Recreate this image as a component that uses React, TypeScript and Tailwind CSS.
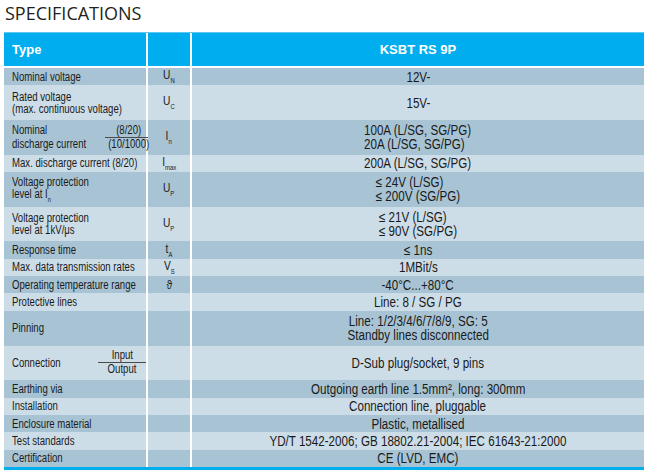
import React from "react";

type Row = {
  label: React.ReactNode;
  sym?: React.ReactNode;
  value: React.ReactNode;
  tall?: boolean;
};

// the original uses a condensed Helvetica; Liberation Sans squeezed gets close
const Narrow = ({ children, className = "" }: React.PropsWithChildren<{ className?: string }>) => (
  <span className={`inline-block origin-left scale-x-[0.8] whitespace-nowrap ${className}`}>{children}</span>
);

const Sub = ({ children }: React.PropsWithChildren) => (
  <span className="align-[-4px] text-[7px] leading-none">{children}</span>
);

const Sym = ({ main, sub }: { main: string; sub?: string }) => (
  <span className="inline-block scale-x-[0.85] whitespace-nowrap">
    {main}
    {sub && <Sub>{sub}</Sub>}
  </span>
);

const Stack = ({ lines }: { lines: string[] }) => (
  <span className="inline-block text-left leading-[14px]">
    {lines.map((l) => (
      <span key={l} className="block">
        {l}
      </span>
    ))}
  </span>
);

const Split = ({ left, top, bottom }: { left: React.ReactNode; top: string; bottom: string }) => (
  <div className="flex h-full items-center justify-between">
    <Narrow className="leading-[14px]">{left}</Narrow>
    <div className="flex w-[48px] flex-col items-center leading-[13px]">
      <span className="scale-x-[0.8] whitespace-nowrap">{top}</span>
      <span className="h-px w-full bg-[#4a4a4a]" />
      <span className="scale-x-[0.8] whitespace-nowrap">{bottom}</span>
    </div>
  </div>
);

const rows: Row[] = [
  { label: "Nominal voltage", sym: <Sym main="U" sub="N" />, value: "12V-" },
  {
    label: (
      <>
        Rated voltage
        <br />
        (max. continuous voltage)
      </>
    ),
    sym: <Sym main="U" sub="C" />,
    value: "15V-",
    tall: true,
  },
  {
    label: (
      <Split
        left={
          <>
            Nominal
            <br />
            discharge current
          </>
        }
        top="(8/20)"
        bottom="(10/1000)"
      />
    ),
    sym: <Sym main="I" sub="n" />,
    value: <Stack lines={["100A (L/SG, SG/PG)", "20A (L/SG, SG/PG)"]} />,
    tall: true,
  },
  { label: "Max. discharge current (8/20)", sym: <Sym main="I" sub="max" />, value: "200A (L/SG, SG/PG)" },
  {
    label: (
      <>
        Voltage protection
        <br />
        level at I<Sub>n</Sub>
      </>
    ),
    sym: <Sym main="U" sub="P" />,
    value: <Stack lines={["≤ 24V (L/SG)", "≤ 200V (SG/PG)"]} />,
    tall: true,
  },
  {
    label: (
      <>
        Voltage protection
        <br />
        level at 1kV/μs
      </>
    ),
    sym: <Sym main="U" sub="P" />,
    value: <Stack lines={["≤ 21V (L/SG)", "≤ 90V (SG/PG)"]} />,
    tall: true,
  },
  { label: "Response time", sym: <Sym main="t" sub="A" />, value: "≤ 1ns" },
  { label: "Max. data transmission rates", sym: <Sym main="V" sub="S" />, value: "1MBit/s" },
  { label: "Operating temperature range", sym: <Sym main="ϑ" />, value: "-40°C...+80°C" },
  { label: "Protective lines", value: "Line: 8 / SG / PG" },
  {
    label: "Pinning",
    value: (
      <span className="block leading-[14px]">
        Line: 1/2/3/4/6/7/8/9, SG: 5
        <br />
        Standby lines disconnected
      </span>
    ),
    tall: true,
  },
  {
    label: <Split left="Connection" top="Input" bottom="Output" />,
    value: "D-Sub plug/socket, 9 pins",
    tall: true,
  },
  { label: "Earthing via", value: "Outgoing earth line 1.5mm², long: 300mm" },
  { label: "Installation", value: "Connection line, pluggable" },
  { label: "Enclosure material", value: "Plastic, metallised" },
  { label: "Test standards", value: "YD/T 1542-2006; GB 18802.21-2004; IEC 61643-21:2000" },
  { label: "Certification", value: "CE (LVD, EMC)" },
];

export default function App() {
  return (
    <div className="h-[475px] w-[649px] bg-white text-[#1a1a1a]">
      <h1 className="pl-[5px] pt-[1px] font-['Open_Sans',sans-serif] text-[18px] leading-[25px] text-[#231f20]">
        SPECIFICATIONS
      </h1>
      <div className="ml-[4px] mt-[6px] w-[640px] font-['Liberation_Sans',Arial,sans-serif] text-[12px]">
        <div className="grid h-[34px] grid-cols-[142px_42px_452px] gap-x-[2px] border-t border-[#5cc8f2] bg-white text-[13px] font-bold text-white">
          <div className="flex items-center bg-[#00aeef] pl-[8px]">Type</div>
          <div className="bg-[#00aeef]" />
          <div className="flex items-center justify-center bg-[#00aeef]">KSBT RS 9P</div>
        </div>
        <div className="mt-[2px]">
          {rows.map((r, i) => {
            const bg = i % 2 === 0 ? "bg-[#a8c4d4]" : "bg-[#cddde7]";
            const h = r.tall ? "h-[34.7px]" : "h-[17.35px]";
            const split = i === 2 || i === 11;
            return (
              <div key={i} className={`grid grid-cols-[142px_42px_452px] gap-x-[2px] bg-white ${h}`}>
                <div className={`flex items-center pl-[8px] ${bg}`}>
                  {split ? <div className="h-full w-full">{r.label}</div> : <Narrow className="leading-[12px]">{r.label}</Narrow>}
                </div>
                <div className={`flex items-center justify-center leading-none ${bg}`}>{r.sym}</div>
                <div className={`flex items-center justify-center text-center ${bg}`}>
                  <span className="inline-block scale-x-[0.83] whitespace-nowrap text-[14px] leading-[14px]">{r.value}</span>
                </div>
              </div>
            );
          })}
        </div>
        <div className="h-[3px] bg-[#00aeef]" />
      </div>
    </div>
  );
}
